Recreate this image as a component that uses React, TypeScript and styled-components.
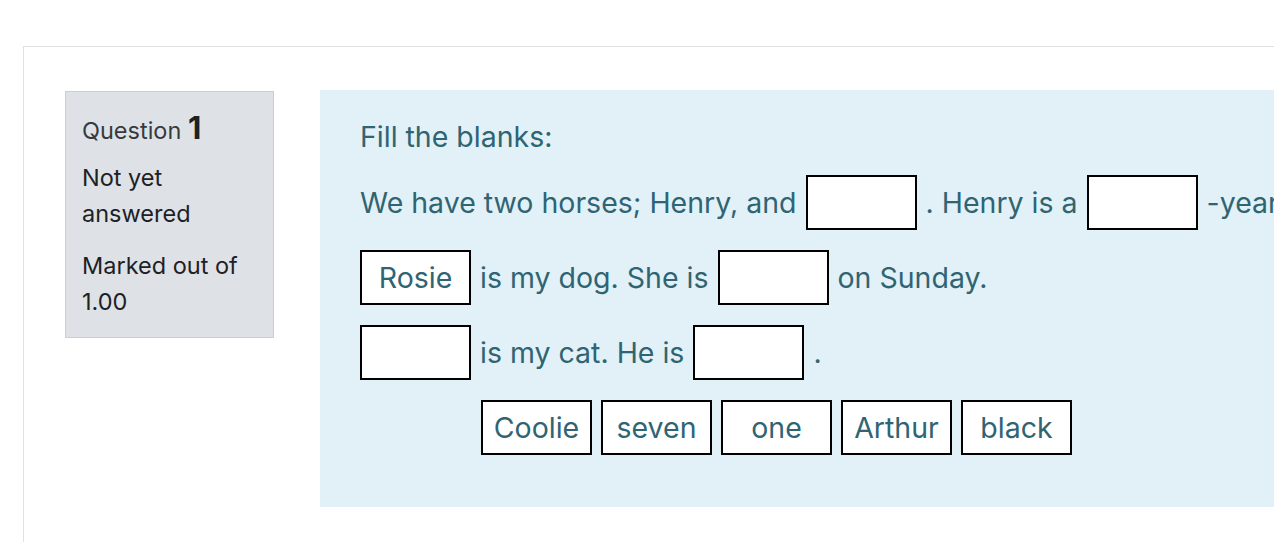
import React from 'react';
import styled, { createGlobalStyle } from 'styled-components';

const GlobalStyle = createGlobalStyle`
  html, body {
    margin: 0;
    padding: 0;
    background: #ffffff;
    overflow: hidden;
  }
  body {
    font-family: 'Inter', 'Liberation Sans', sans-serif;
  }
`;

const Page = styled.div`
  padding: 46px 0 0 23px;
  width: 1274px;
  height: 542px;
  box-sizing: border-box;
  overflow: hidden;
`;

const Card = styled.div`
  display: flex;
  align-items: flex-start;
  gap: 46px;
  width: 1600px;
  min-height: 620px;
  box-sizing: border-box;
  border: 1px solid #dfe2e5;
  padding: 43px 0 0 41px;
`;

const Info = styled.div`
  flex: 0 0 209px;
  margin-top: 1px;
  box-sizing: border-box;
  background: #dee2e6;
  border: 1px solid #c9ced4;
  padding: 20px 16px 17px 16px;
  color: #1d2125;
  font-size: 23.5px;
  line-height: 36px;
`;

const QuestionNo = styled.h3`
  margin: 0 0 12px 0;
  height: 36px;
  font-size: 23.5px;
  font-weight: 400;
  line-height: 36px;
  color: #373a3c;
`;

const QNumber = styled.span`
  font-size: 31px;
  font-weight: 700;
  line-height: 1;
  color: #1d2125;
`;

const InfoLine = styled.div<{ $gap?: number }>`
  margin-bottom: ${(p) => p.$gap ?? 0}px;
`;

const Formulation = styled.div`
  flex: 1;
  background: #e2f1f7;
  color: #2f6473;
  padding: 26px 40px 52px 40px;
  font-size: 28.5px;
  line-height: 42px;
`;

const Prompt = styled.p`
  margin: 0 0 17px 0;
  white-space: nowrap;
`;

const Row = styled.div`
  display: flex;
  align-items: center;
  gap: 9px;
  height: 55px;
  margin-bottom: 20px;
  white-space: nowrap;
`;

const DragRow = styled(Row)`
  margin-bottom: 0;
  padding-left: 1px;
`;

const Box = styled.span<{ $hidden?: boolean }>`
  display: inline-flex;
  align-items: center;
  justify-content: center;
  flex: 0 0 111px;
  width: 111px;
  height: 55px;
  box-sizing: border-box;
  background: #ffffff;
  border: 2px solid #000000;
  color: #2f6473;
  visibility: ${(p) => (p.$hidden ? 'hidden' : 'visible')};
`;

const Text = styled.span``;

const choices = ['Rosie', 'Coolie', 'seven', 'one', 'Arthur', 'black'];

export default function App() {
  return (
    <>
      <GlobalStyle />
      <Page>
        <Card>
          <Info>
            <QuestionNo>
              Question <QNumber>1</QNumber>
            </QuestionNo>
            <InfoLine $gap={16}>Not yet answered</InfoLine>
            <InfoLine>Marked out of 1.00</InfoLine>
          </Info>
          <Formulation>
            <Prompt>Fill the blanks:</Prompt>
            <Row>
              <Text>We have two horses; Henry, and</Text>
              <Box />
              <Text>. Henry is a</Text>
              <Box />
              <Text>-year old.</Text>
            </Row>
            <Row>
              <Box>Rosie</Box>
              <Text>is my dog. She is</Text>
              <Box />
              <Text>on Sunday.</Text>
            </Row>
            <Row>
              <Box />
              <Text>is my cat. He is</Text>
              <Box />
              <Text>.</Text>
            </Row>
            <DragRow>
              {choices.map((c, i) => (
                <Box key={c} $hidden={i === 0}>
                  {c}
                </Box>
              ))}
            </DragRow>
          </Formulation>
        </Card>
      </Page>
    </>
  );
}
